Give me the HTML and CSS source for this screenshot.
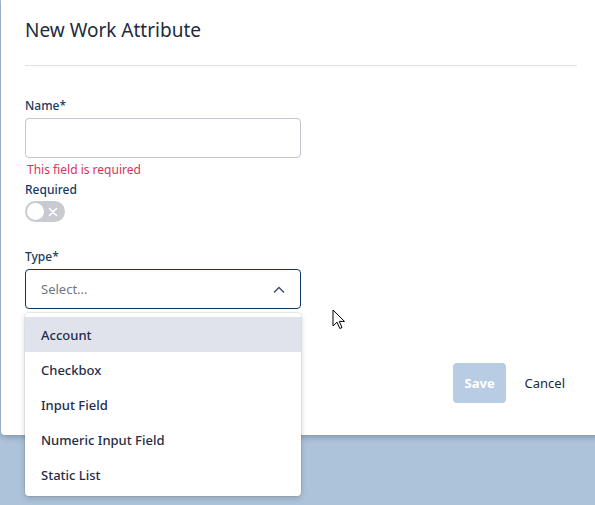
FILE: index.html
```html
<!DOCTYPE html>
<html lang="en">
<head>
<meta charset="utf-8">
<title>New Work Attribute</title>
<link rel="stylesheet" href="styles.css">
</head>
<body>
<div class="modal">
  <header class="modal-header">
    <h1 class="modal-title">New Work Attribute</h1>
  </header>
  <div class="modal-body">
    <label class="field-label">Name*</label>
    <div class="text-input"></div>
    <div class="field-error">This field is required</div>
    <label class="field-label label-required">Required</label>
    <div class="toggle">
      <span class="toggle-knob"></span>
      <svg class="toggle-x" width="10" height="10" viewBox="0 0 10 10"><path d="M1.5 1.5 L8.5 8.5 M8.5 1.5 L1.5 8.5" stroke="#fff" stroke-width="1.6" stroke-linecap="round"/></svg>
    </div>
    <label class="field-label label-type">Type*</label>
    <div class="select-wrap">
      <div class="select">
        <span class="select-placeholder">Select...</span>
        <svg class="chevron" width="14" height="9" viewBox="0 0 14 9"><path d="M2 7.5 L7 2.5 L12 7.5" fill="none" stroke="#3d4a5c" stroke-width="1.4"/></svg>
      </div>
      <ul class="menu">
        <li class="menu-item active">Account</li>
        <li class="menu-item">Checkbox</li>
        <li class="menu-item">Input Field</li>
        <li class="menu-item">Numeric Input Field</li>
        <li class="menu-item">Static List</li>
      </ul>
    </div>
  </div>
  <footer class="modal-footer">
    <button class="btn btn-save">Save</button>
    <button class="btn btn-cancel">Cancel</button>
  </footer>
</div>
<svg class="cursor" width="14" height="22" viewBox="0 0 14 22"><path d="M1 1 L1 17 L5 13.2 L7.8 19.5 L10 18.5 L7.3 12.4 L12.5 12.4 Z" fill="#fff" stroke="#000" stroke-width="1" stroke-linejoin="round"/></svg>
</body>
</html>
```
FILE: styles.css
```css
* { box-sizing: border-box; }
html, body { margin: 0; padding: 0; }
body {
  background: #adc3d9;
  font-family: "Noto Sans", "Liberation Sans", sans-serif;
  width: 595px;
  height: 505px;
  overflow: hidden;
  position: relative;
}
.modal {
  margin-left: 1px;
  width: 600px;
  height: 435px;
  background: #fff;
  border-radius: 0 0 4px 4px;
  box-shadow: 0 2px 6px rgba(40, 60, 90, 0.35);
  padding: 0 24px;
  display: flex;
  flex-direction: column;
}
.modal-header {
  padding-top: 18px;
  height: 66px;
  border-bottom: 1px solid #e1e2e6;
}
.modal-title {
  margin: 0;
  font-size: 19px;
  line-height: 24px;
  font-weight: 400;
  color: #1d2b3c;
}
.modal-body {
  padding-top: 31px;
  display: flex;
  flex-direction: column;
  align-items: flex-start;
}
.field-label {
  display: block;
  font-size: 12px;
  line-height: 16px;
  padding-top: 1px;
  height: 17px;
  font-weight: 500;
  color: #163a62;
}
.text-input {
  margin-top: 4px;
  width: 276px;
  height: 40px;
  border: 1px solid #c3c4cc;
  border-radius: 4px;
}
.field-error {
  margin-top: 3px;
  padding-top: 1px;
  font-size: 12px;
  line-height: 16px;
  color: #d7335c;
  padding-left: 2px;
}
.label-required { margin-top: 3px; }
.toggle {
  margin-top: 3px;
  width: 40px;
  height: 21px;
  border-radius: 11px;
  background: #c8cad1;
  display: flex;
  align-items: center;
  justify-content: space-between;
  padding: 0 7px 0 2px;
}
.toggle-knob {
  width: 17px;
  height: 17px;
  border-radius: 50%;
  background: #fff;
}
.toggle-x { display: block; }
.label-type { margin-top: 26px; }
.select-wrap {
  position: relative;
  margin-top: 4px;
}
.select {
  width: 276px;
  height: 40px;
  border: 1px solid #0f3561;
  border-radius: 4px;
  display: flex;
  align-items: center;
  justify-content: space-between;
  padding: 0 14px 0 15px;
}
.select-placeholder {
  font-size: 13px;
  color: #737780;
}
.chevron { display: block; }
.menu {
  position: absolute;
  top: 44px;
  left: 0;
  width: 276px;
  margin: 0;
  padding: 4px 0;
  list-style: none;
  background: #fff;
  border-radius: 4px;
  box-shadow: 0 0 0 1px rgba(0, 0, 0, 0.06), 0 2px 6px rgba(0, 0, 0, 0.18);
  z-index: 2;
}
.menu-item {
  height: 35px;
  line-height: 34px;
  padding-top: 1px;
  padding-left: 16px;
  font-size: 13px;
  font-weight: 500;
  color: #1f2d48;
}
.menu-item.active { background: #e0e3ec; }
.modal-footer {
  margin-top: 54px;
  display: flex;
  justify-content: flex-end;
  gap: 7px;
}
.btn {
  font-family: inherit;
  font-size: 13px;
  height: 40px;
  border: none;
  border-radius: 4px;
  padding: 0 12px;
  cursor: pointer;
}
.btn-save {
  width: 53px;
  background: #b8cce3;
  color: #fff;
  font-weight: 700;
}
.btn-cancel {
  background: transparent;
  color: #1a2a40;
  font-weight: 400;
}
.cursor {
  position: absolute;
  left: 332px;
  top: 309px;
  z-index: 5;
}
```
